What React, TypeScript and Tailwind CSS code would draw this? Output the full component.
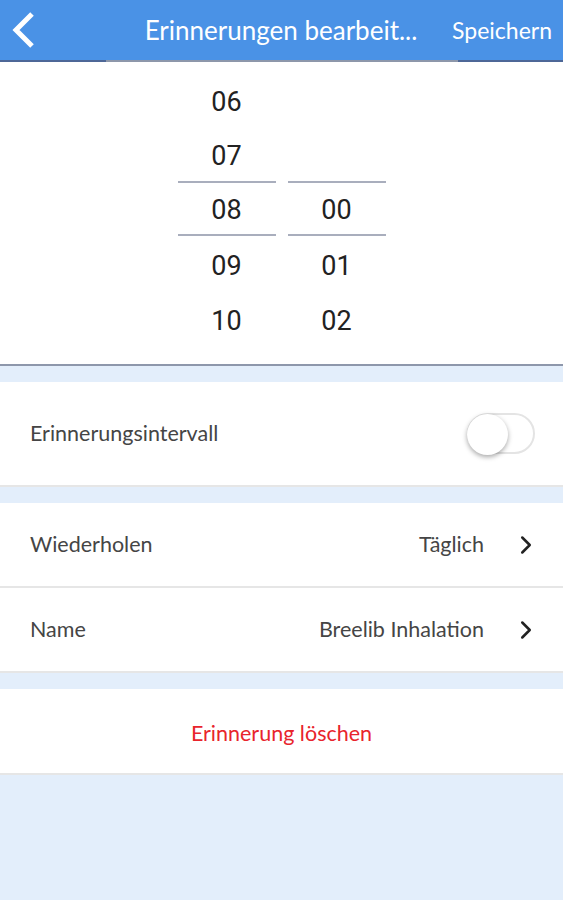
import { ChevronRight } from "lucide-react";

const hours = ["06", "07", "08", "09", "10"];
const minutes = ["", "", "00", "01", "02"];

const Column = ({ items }: { items: string[] }) => (
  <div className="flex flex-col w-[98px]">
    {items.map((v, i) => (
      <div
        key={i}
        className={
          i === 2
            ? "h-[55px] pt-[4px] flex items-center justify-center border-y-2 border-[#a9aebd]"
            : i === 1
            ? "h-[54px] pt-[5px] flex items-center justify-center"
            : "h-[55px] pt-[5px] flex items-center justify-center"
        }
      >
        {v}
      </div>
    ))}
  </div>
);

const Row = ({ label, value }: { label: string; value: string }) => (
  <div className="h-[85px] flex items-center pl-[30px] pr-[22px] bg-white border-b-2 border-[#e6e6e6]">
    <span className="flex-1">{label}</span>
    <span className="mr-[27px]">{value}</span>
    <ChevronRight size={30} strokeWidth={2} className="text-[#222]" />
  </div>
);

export default function App() {
  return (
    <div className="w-[563px] h-[900px] bg-[#e3eefb] flex flex-col font-['Lato',sans-serif] text-[21.5px] text-[#454545]">
      <div className="h-[60px] bg-[#4a92e6] flex items-center text-white relative">
        <svg width="34" height="40" viewBox="0 0 34 40" className="ml-[6px]">
          <path d="M26 4 L10 20 L26 36" stroke="white" strokeWidth="5" fill="none" />
        </svg>
        <div className="flex-1 text-center text-[26px] pl-[70px] pr-[0px]">Erinnerungen bearbeit...</div>
        <div className="text-[23px] pr-[11px]">Speichern</div>
      </div>
      <div className="flex h-[2px]">
        <div className="w-[106px] bg-[#4d6797]"></div>
        <div className="flex-1 bg-[#8d97aa]"></div>
        <div className="w-[105px] bg-[#4d6797]"></div>
      </div>

      <div className="bg-white h-[304px] pt-[10px] flex justify-center gap-[12px] font-['Roboto',sans-serif] text-[27px] text-[#222] border-b-2 border-[#8e97ab]">
        <Column items={hours} />
        <Column items={minutes} />
      </div>

      <div className="h-[16px]"></div>
      <div className="h-[105px] flex items-center pl-[30px] pr-[28px] bg-white border-b-2 border-[#e6e6e6]">
        <span className="flex-1">Erinnerungsintervall</span>
        <div className="w-[68px] h-[41px] rounded-full border-2 border-[#e4e4e4] bg-white relative">
          <div className="absolute -left-[2px] -top-[1px] w-[41px] h-[41px] rounded-full bg-white shadow-[0_2px_5px_rgba(0,0,0,0.35)]"></div>
        </div>
      </div>

      <div className="h-[16px]"></div>
      <Row label="Wiederholen" value="Täglich" />
      <Row label="Name" value="Breelib Inhalation" />

      <div className="h-[16px]"></div>
      <div className="h-[86px] pt-[4px] flex items-center justify-center bg-white border-b-2 border-[#e6e6e6] text-[#e8242c]">
        Erinnerung löschen
      </div>
    </div>
  );
}
